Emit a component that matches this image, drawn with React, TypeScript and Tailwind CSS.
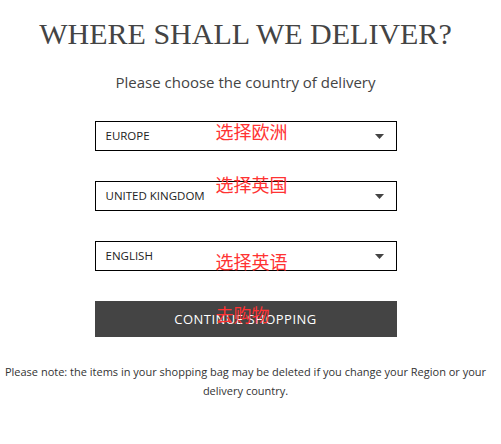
export default function App() {
  const selects = [
    { value: 'EUROPE', note: '选择欧洲', noteTop: 'top-[-1px]' },
    { value: 'UNITED KINGDOM', note: '选择英国', noteTop: 'top-[-8px]' },
    { value: 'ENGLISH', note: '选择英语', noteTop: 'top-[9px]' },
  ]

  return (
    <main className="w-[491px] h-[444px] bg-white flex flex-col items-center text-[#444]" style={{ fontFamily: '"Open Sans", sans-serif' }}>
      <h1
        className="mt-[14px] text-[30px] leading-[40px] text-[#444]"
        style={{ fontFamily: '"Liberation Serif", "Times New Roman", serif' }}
      >
        WHERE SHALL WE DELIVER?
      </h1>
      <p className="mt-[17px] text-[15px] leading-[22px]">Please choose the country of delivery</p>

      <div className="mt-[28px] w-[302px] flex flex-col gap-[30px]">
        {selects.map((s) => (
          <div key={s.value} className="relative">
            <div className="h-[30px] border border-black flex items-center justify-between pl-[10px] pr-[12px] text-[11.5px] text-[#222]">
              <span>{s.value}</span>
              <svg width="9" height="5" viewBox="0 0 9 5" className="mt-[1px]">
                <path d="M0 0h9L4.5 5z" fill="#444" />
              </svg>
            </div>
            <span
              className={`absolute left-[121px] ${s.noteTop} text-[18px] leading-[22px] text-[#f33]`}
              style={{ fontFamily: '"Noto Sans CJK SC", sans-serif' }}
            >
              {s.note}
            </span>
          </div>
        ))}

        <div className="relative">
          <button className="w-[302px] h-[36px] bg-[#444] text-white text-[13px] tracking-[0.5px] flex items-center justify-center pt-[2px]">
            CONTINUE SHOPPING
          </button>
          <span
            className="absolute left-[121px] top-[2px] text-[18px] leading-[22px] text-[#f33]"
            style={{ fontFamily: '"Noto Sans CJK SC", sans-serif' }}
          >
            去购物
          </span>
        </div>
      </div>

      <p className="mt-[25px] w-[490px] text-center text-[11px] leading-[19px] text-[#333]">
        Please note: the items in your shopping bag may be deleted if you change your Region or your delivery country.
      </p>
    </main>
  )
}
